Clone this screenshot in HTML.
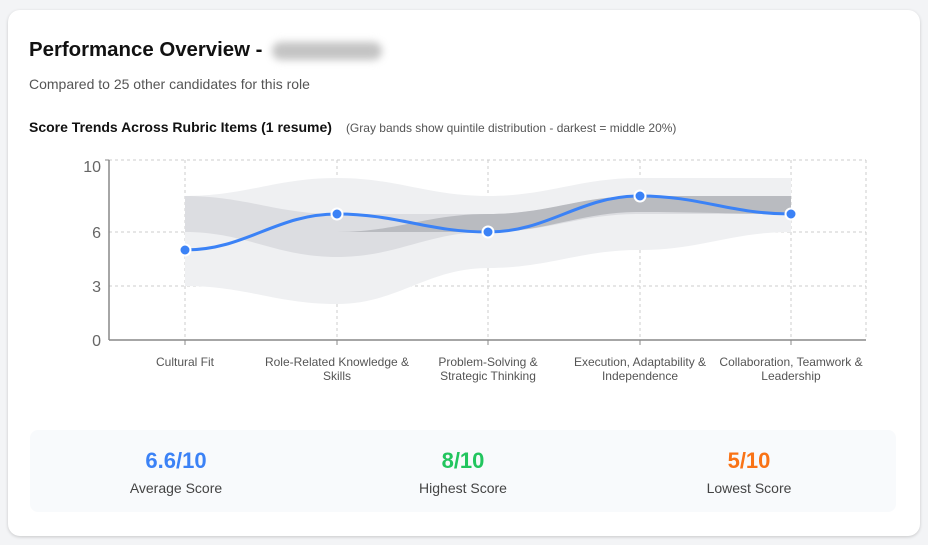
<!DOCTYPE html>
<html><head><meta charset="utf-8"><style>
body{margin:0;width:928px;height:545px;background:#f3f4f6;font-family:"Liberation Sans",sans-serif;overflow:hidden}
.card{position:absolute;left:8px;top:10px;width:912px;height:526px;background:#fff;border-radius:12px;box-shadow:0 1px 3px rgba(0,0,0,.18)}
h1{position:absolute;left:21px;top:27px;margin:0;font-size:20.4px;line-height:26px;font-weight:bold;color:#111;white-space:nowrap}
.blur{display:inline-block;width:110px;height:18px;background:#c4c4c4;border-radius:9px;filter:blur(4px);vertical-align:middle;margin-left:4px}
.sub{position:absolute;left:21px;top:66px;font-size:14px;color:#555}
.t2{position:absolute;left:21px;top:109px;font-size:14px;font-weight:bold;color:#111}
.t2 span{font-weight:normal;font-size:12px;color:#555;margin-left:14px}
.stats{position:absolute;left:22px;top:420px;width:866px;height:82px;background:#f8fafc;border-radius:8px}
.s{position:absolute;top:18px;width:200px;text-align:center}
.s b{display:block;font-size:22px;font-weight:bold}
.s i{display:block;font-style:normal;font-size:14px;color:#444;margin-top:6px}
</style></head><body>
<div class="card">
<h1>Performance Overview - <span class="blur"></span></h1>
<div class="sub">Compared to 25 other candidates for this role</div>
<div class="t2">Score Trends Across Rubric Items (1 resume)<span>(Gray bands show quintile distribution - darkest = middle 20%)</span></div>
<div class="stats">
<div class="s" style="left:46px"><b style="color:#3b82f6">6.6/10</b><i>Average Score</i></div>
<div class="s" style="left:333px"><b style="color:#22c55e">8/10</b><i>Highest Score</i></div>
<div class="s" style="left:619px"><b style="color:#f97316">5/10</b><i>Lowest Score</i></div>
</div>
</div>
<svg id="c" width="928" height="545" style="position:absolute;left:0;top:0" font-family="Liberation Sans, sans-serif"></svg>
<script>
var X=[185,337,488,640,791];
function seg(ys,rev){var xs=X.slice(),y=ys.slice();if(rev){xs.reverse();y.reverse();}var d="";for(var i=0;i<xs.length-1;i++){var dx=(xs[i+1]-xs[i])/2.5;d+=(i==0&&!rev?"M":(i==0?"L":""))+(i==0?xs[0]+","+y[0]:"")+" C"+(xs[i]+dx)+","+y[i]+" "+(xs[i+1]-dx)+","+y[i+1]+" "+xs[i+1]+","+y[i+1];}return d;}
function band(t,b,f){return '<path d="'+seg(t)+' '+seg(b,true)+' Z" fill="'+f+'"/>';}
var s="";
[160,232,286].forEach(function(y){s+='<line x1="109" x2="866" y1="'+y+'" y2="'+y+'" stroke="#ccc" stroke-dasharray="3,3"/>';});
X.concat([866]).forEach(function(x){s+='<line x1="'+x+'" x2="'+x+'" y1="160" y2="340" stroke="#ccc" stroke-dasharray="3,3"/>';});
s+=band([196,178,196,178,178],[286,304,268,250,232],"#eff0f2");
s+=band([196,214,214,196,196],[232,257,232,214,214],"#dcdde1");
s+=band([232,232,214,196,196],[232,232,232,212,214],"#b9bbc0");
s+='<line x1="109" x2="109" y1="160" y2="340" stroke="#888" stroke-width="1.5"/><line x1="109" x2="866" y1="340" y2="340" stroke="#888" stroke-width="1.5"/><line x1="105" x2="109" y1="160" y2="160" stroke="#888"/>';
X.forEach(function(x){s+='<line x1="'+x+'" x2="'+x+'" y1="340" y2="345" stroke="#888"/>';});
[["10",166],["6",232],["3",286],["0",340]].forEach(function(a){s+='<text x="101" y="'+(a[1]+6)+'" text-anchor="end" font-size="16" fill="#666">'+a[0]+'</text>';});
var L=[["Cultural Fit"],["Role-Related Knowledge &","Skills"],["Problem-Solving &","Strategic Thinking"],["Execution, Adaptability &","Independence"],["Collaboration, Teamwork &","Leadership"]];
L.forEach(function(l,i){l.forEach(function(t,j){s+='<text x="'+X[i]+'" y="'+(366+j*14)+'" text-anchor="middle" font-size="12" fill="#555">'+t.replace("&","&amp;")+'</text>';});});
var P=[250,214,232,196,214];
s+='<path d="'+seg(P)+'" fill="none" stroke="#3b82f6" stroke-width="3"/>';
X.forEach(function(x,i){s+='<circle cx="'+x+'" cy="'+P[i]+'" r="5.5" fill="#3b82f6" stroke="#fff" stroke-width="2"/>';});
document.getElementById("c").innerHTML=s;
</script>
</body></html>
